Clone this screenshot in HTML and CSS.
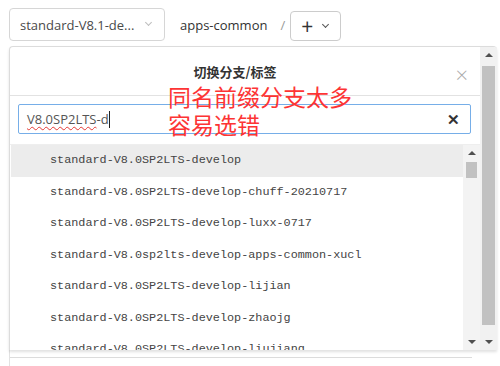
FILE: index.html
```html
<!DOCTYPE html>
<html lang="zh-CN">
<head>
    <meta charset="UTF-8">
    <title>切换分支/标签</title>
    <link rel="stylesheet" href="styles.css">
</head>
<body>
    <div class="page">
        <!-- Repo toolbar -->
        <div class="toolbar">
            <div class="branch-select">
                <span class="branch-name">standard-V8.1-de...</span>
                <span class="chevron light"></span>
            </div>
            <span class="repo-path">apps-common</span>
            <span class="path-sep">/</span>
            <div class="add-button">
                <span class="plus">+</span>
                <span class="chevron"></span>
            </div>
        </div>

        <!-- Branch switch dialog -->
        <div class="modal">
            <div class="modal-main">
                <div class="modal-header">
                    <span class="modal-title">切换分支/标签</span>
                    <span class="modal-close">&times;</span>
                </div>
                <div class="search-box">
                    <span class="search-text"><span class="misspelled">V8.0SP2LTS</span>-d</span><span class="caret"></span>
                    <span class="search-clear">&#x2715;</span>
                </div>
                <div class="list-row">
                    <ul class="branch-list">
                        <li class="branch-item active">standard-V8.0SP2LTS-develop</li>
                        <li class="branch-item">standard-V8.0SP2LTS-develop-chuff-20210717</li>
                        <li class="branch-item">standard-V8.0SP2LTS-develop-luxx-0717</li>
                        <li class="branch-item">standard-V8.0sp2lts-develop-apps-common-xucl</li>
                        <li class="branch-item">standard-V8.0SP2LTS-develop-lijian</li>
                        <li class="branch-item">standard-V8.0SP2LTS-develop-zhaojg</li>
                        <li class="branch-item">standard-V8.0SP2LTS-develop-liujiang</li>
                    </ul>
                    <div class="scrollbar inner">
                        <span class="arrow up"></span>
                        <div class="track"><div class="thumb small"></div></div>
                        <span class="arrow down"></span>
                    </div>
                </div>
            </div>
            <div class="scrollbar outer">
                <span class="arrow up"></span>
                <div class="track"><div class="thumb long"></div></div>
                <span class="arrow down"></span>
            </div>

            <div class="annotation">同名前缀分支太多<br>容易选错</div>
        </div>

        <div class="page-rest">
            <div class="page-rest-line"></div>
        </div>
    </div>
</body>
</html>
```

FILE: styles.css
```css
* {
    box-sizing: border-box;
    margin: 0;
    padding: 0;
}

body {
    font-family: 'Open Sans', 'Noto Sans CJK SC', sans-serif;
    background-color: #fff;
    color: #333;
    width: 500px;
    height: 366px;
    overflow: hidden;
}

.page {
    padding: 8px 0 0 9px;
}

.toolbar {
    display: flex;
    align-items: flex-end;
    height: 33px;
}

.branch-select {
    display: flex;
    align-items: center;
    justify-content: space-between;
    width: 156px;
    height: 33px;
    padding: 0 13px 0 10px;
    border: 1px solid #d6d6d6;
    border-radius: 4px;
    font-size: 13px;
    color: #4a4a4a;
}

.chevron {
    display: inline-block;
    width: 5px;
    height: 5px;
    border-right: 1.5px solid #555;
    border-bottom: 1.5px solid #555;
    transform: rotate(45deg);
    margin-top: -4px;
}

.chevron.light {
    border-color: #bdbdbd;
    border-width: 1px;
}

.repo-path {
    align-self: center;
    margin-left: 15px;
    font-size: 13px;
    color: #333;
}

.path-sep {
    align-self: center;
    margin-left: 13px;
    font-size: 13px;
    color: #999;
}

.add-button {
    display: flex;
    align-items: center;
    gap: 10px;
    height: 30px;
    width: 51px;
    margin-left: 5px;
    padding-left: 10px;
    border: 1px solid #ccc;
    border-radius: 4px;
}

.plus {
    font-size: 21px;
    line-height: 20px;
    color: #333;
}

.modal {
    position: relative;
    display: flex;
    width: 488px;
    height: 304px;
    margin-top: 5px;
    border: 1px solid #dcdcdc;
    border-bottom: none;
    border-right: none;
    border-radius: 4px 4px 0 0;
    box-shadow: 0 2px 3px rgba(0, 0, 0, 0.12);
    overflow: hidden;
}

.modal-main {
    width: 470px;
    display: flex;
    flex-direction: column;
}

.modal-header {
    position: relative;
    height: 49px;
    border-bottom: 1px solid #e2e2e2;
    display: flex;
    align-items: center;
    justify-content: center;
}

.modal-title {
    font-family: 'Noto Sans CJK SC', sans-serif;
    font-size: 13px;
    font-weight: bold;
    color: #333;
    margin-right: 20px;
}

.modal-close {
    position: absolute;
    right: 12px;
    top: 12px;
    font-size: 22px;
    font-weight: 300;
    color: #aaa;
}

.search-box {
    display: flex;
    align-items: center;
    width: 453px;
    height: 30px;
    margin: 8px 0 0 8px;
    padding: 0 10px 0 8px;
    border: 1px solid #76aee8;
    border-radius: 2px;
    font-size: 13px;
    color: #555;
}

.misspelled {
    text-decoration: underline wavy #e53935;
    text-decoration-thickness: 1px;
    text-underline-offset: 2px;
}

.caret {
    display: inline-block;
    width: 1px;
    height: 17px;
    background-color: #222;
}

.search-clear {
    margin-left: auto;
    font-size: 15px;
    font-weight: bold;
    color: #333;
}

.list-row {
    display: flex;
    margin-top: 10px;
    flex: 1;
    border-top: 1px solid #eee;
    min-height: 0;
}

.branch-list {
    list-style: none;
    width: 452px;
    margin-left: 1px;
    overflow: hidden;
}

.branch-item {
    height: 31.5px;
    line-height: 31px;
    padding-left: 39px;
    font-family: 'Liberation Mono', 'DejaVu Sans Mono', monospace;
    font-size: 11.8px;
    color: #444;
    white-space: nowrap;
}

.branch-item.active {
    background-color: #ececec;
}

.scrollbar {
    width: 17px;
    display: flex;
    flex-direction: column;
    align-items: center;
    background-color: #f1f1f1;
}

.scrollbar .track {
    flex: 1;
    width: 100%;
    padding: 0 2px;
}

.scrollbar .thumb {
    background-color: #c1c1c1;
}

.thumb.small {
    height: 16px;
    margin: 1px 1px 0;
}

.thumb.long {
    height: 259px;
    margin-top: 3px;
}

.arrow {
    width: 0;
    height: 0;
    border-left: 4px solid transparent;
    border-right: 4px solid transparent;
    margin: 6px 0;
}

.arrow.up {
    border-bottom: 4px solid #505050;
}

.arrow.down {
    border-top: 4px solid #505050;
}

.scrollbar.inner {
    background-color: #f3f3f3;
}

.annotation {
    position: absolute;
    left: 158px;
    top: 35px;
    font-family: 'Noto Sans CJK SC', sans-serif;
    font-size: 23px;
    line-height: 28px;
    color: #fd3434;
}

.page-rest {
    border-left: 1px solid #e2e2e2;
    height: 20px;
    padding-top: 7px;
}

.page-rest-line {
    width: 462px;
    border-top: 1px solid #dcdcdc;
}
```
